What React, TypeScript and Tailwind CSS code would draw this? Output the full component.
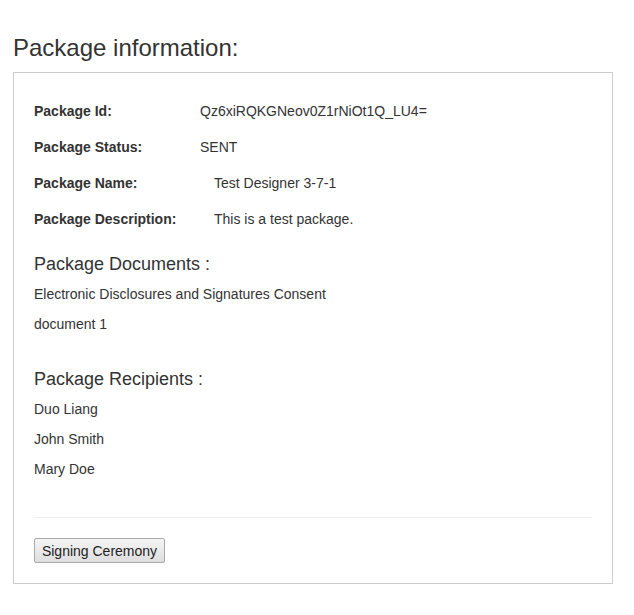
const font = { fontFamily: '"Liberation Sans", Arial, Helvetica, sans-serif' };

const details = [
  [
    { label: 'Package Id:', value: 'Qz6xiRQKGNeov0Z1rNiOt1Q_LU4=' },
    { label: 'Package Status:', value: 'SENT' },
  ],
  [
    { label: 'Package Name:', value: 'Test Designer 3-7-1' },
    { label: 'Package Description:', value: 'This is a test package.' },
  ],
];

const documents = ['Electronic Disclosures and Signatures Consent', 'document 1'];
const recipients = ['Duo Liang', 'John Smith', 'Mary Doe'];

export default function App() {
  return (
    <div className="min-h-[615px] bg-white text-[#333] px-[13px] pt-[35px]" style={font}>
      <h2 className="text-[24px] leading-[26px] mb-[11px]">Package information:</h2>

      <div className="w-[600px] border border-[#ccc] p-5">
        {/* details tables */}
        {details.map((group, gi) => (
          <div key={gi} className="flex flex-col">
            {group.map((row) => (
              <div key={row.label} className="flex h-9 items-center text-[14px] leading-5">
                <span className={`font-bold shrink-0 ${gi === 0 ? 'w-[166px]' : 'w-[180px]'}`}>{row.label}</span>
                <span>{row.value}</span>
              </div>
            ))}
          </div>
        ))}

        <h4 className="text-[18px] leading-5 mt-[17px] mb-[10px]">Package Documents :</h4>
        {documents.map((d) => (
          <p key={d} className="text-[14px] leading-5 mb-[10px]">{d}</p>
        ))}

        <h4 className="text-[18px] leading-5 mt-[35px] mb-[10px]">Package Recipients :</h4>
        {recipients.map((r) => (
          <p key={r} className="text-[14px] leading-5 mb-[10px]">{r}</p>
        ))}

        <hr className="border-0 border-t border-[#eee] mt-[38px] mb-[20px]" />

        <button className="h-[25px] w-[131px] text-[14px] leading-5 text-[#222] border border-[#a9a9a9] rounded-[2px] bg-gradient-to-b from-[#f5f5f5] to-[#dedede]">
          Signing Ceremony
        </button>
      </div>
    </div>
  );
}
